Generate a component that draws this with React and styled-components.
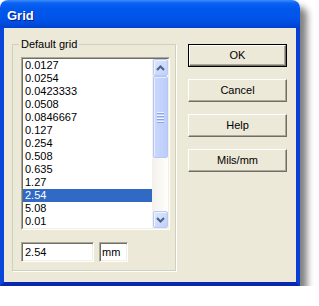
import React from 'react';
import styled, { createGlobalStyle } from 'styled-components';

const Global = createGlobalStyle`
  html, body { margin: 0; padding: 0; background: #fff; }
  body { font-family: "Liberation Sans", Arial, sans-serif; font-size: 11px; color: #000; }
  * { box-sizing: border-box; }
`;

const Window = styled.div`
  width: 300px;
  height: 286px;
  display: flex;
  flex-direction: column;
  border-radius: 8px 8px 0 0;
  box-shadow: 7px 7px 7px rgba(0, 0, 0, 0.5);
`;

const TitleBar = styled.div`
  height: 28px;
  flex: none;
  display: flex;
  align-items: center;
  padding: 2px 0 0 7px;
  border-radius: 8px 8px 0 0;
  background: linear-gradient(
    to bottom,
    #3d8dfb 0px,
    #0b63f2 3px,
    #0058ee 8px,
    #0054e9 18px,
    #004bdd 24px,
    #0041d0 28px
  );
  color: #fff;
  font-family: "Liberation Sans", Arial, sans-serif;
  font-weight: bold;
  font-size: 13px;
  text-shadow: 1px 1px 0 #0a1f8c;
`;

const Frame = styled.div`
  flex: 1;
  display: flex;
  border-left: 4px solid #0846dc;
  border-right: 4px solid #0a3ed2;
  border-bottom: 4px solid #0a28ad;
  background: #ece9d8;
`;

const Client = styled.div`
  flex: 1;
  display: flex;
  align-items: flex-start;
  gap: 12px;
  padding: 10px 9px 0 8px;
  background: #ece9d8;
`;

const GroupBox = styled.fieldset`
  margin: 0;
  width: 164px;
  min-width: 0;
  padding: 6px 8px 8px 8px;
  border: 1px solid #d0d0bf;
  box-shadow: 1px 1px 0 #fff;
  display: flex;
  flex-direction: column;
  gap: 12px;
`;

const Legend = styled.legend`
  margin-left: -2px;
  padding: 0 2px;
  line-height: 13px;
  font-size: 11px;
`;

const ListOuter = styled.div`
  width: 149px;
  height: 173px;
  border: 1px solid;
  border-color: #aca899 #fff #fff #aca899;
  display: flex;
`;

const ListInner = styled.div`
  flex: 1;
  display: flex;
  border: 1px solid;
  border-color: #716f64 #f1efe2 #f1efe2 #716f64;
  background: #fff;
`;

const Items = styled.div`
  flex: 1;
  display: flex;
  flex-direction: column;
  overflow: hidden;
`;

const Item = styled.div`
  height: 13px;
  line-height: 13px;
  padding-left: 2px;
  white-space: nowrap;
  background: ${(p) => (p.$selected ? '#316ac5' : 'transparent')};
  color: ${(p) => (p.$selected ? '#fff' : '#000')};
`;

const ScrollBar = styled.div`
  width: 16px;
  flex: none;
  display: flex;
  flex-direction: column;
  background: linear-gradient(to right, #f3f1ec, #fefefb);
`;

const ScrollButton = styled.div`
  height: 17px;
  margin: 0 0 0 1px;
  border: 1px solid #b9cbf5;
  border-radius: 2px;
  background: linear-gradient(to bottom right, #dce6fd, #bfd0fa);
  display: flex;
  align-items: center;
  justify-content: center;
  box-shadow: inset 1px 1px 0 #eef3ff;
`;

const Thumb = styled.div`
  height: 82px;
  margin: 0 0 0 1px;
  border: 1px solid #b4c8f6;
  border-radius: 2px;
  background: linear-gradient(to right, #c9d8fc, #bccdfa);
  box-shadow: inset 1px 1px 0 #e5ecff;
  display: flex;
  flex-direction: column;
  align-items: center;
  justify-content: center;
  gap: 1px;
`;

const Grip = styled.div`
  width: 7px;
  height: 1px;
  background: #eef3ff;
  box-shadow: 0 1px 0 #8ca4e0;
  margin-bottom: 1px;
`;

const Track = styled.div`
  flex: 1;
`;

const FieldRow = styled.div`
  display: flex;
  gap: 5px;
`;

const Field = styled.div`
  width: ${(p) => p.$w}px;
  height: 20px;
  border: 1px solid;
  border-color: #aca899 #fff #fff #aca899;
  background: #fff;
  box-shadow: inset 1px 1px 0 #716f64, inset -1px -1px 0 #f1efe2;
  padding-left: ${(p) => p.$pad}px;
  line-height: 18px;
`;

const ButtonColumn = styled.div`
  margin-top: 6px;
  display: flex;
  flex-direction: column;
  gap: 12px;
  width: 99px;
`;

const Button = styled.div`
  height: 23px;
  display: flex;
  border: ${(p) => (p.$default ? '1px solid #000' : 'none')};
`;

const ButtonFace = styled.div`
  flex: 1;
  display: flex;
  align-items: center;
  justify-content: center;
  border: 1px solid;
  border-color: #fff #716f64 #716f64 #fff;
  box-shadow: inset -1px -1px 0 #aca899;
  background: #ece9d8;
  font-size: 11px;
  padding-bottom: 1px;
`;

const Chevron = ({ up }) => (
  <svg width="9" height="6" viewBox="0 0 9 6">
    <path
      d={up ? 'M1 5 L4.5 1.5 L8 5' : 'M1 1 L4.5 4.5 L8 1'}
      fill="none"
      stroke="#4d6185"
      strokeWidth="2"
    />
  </svg>
);

const values = [
  '0.0127',
  '0.0254',
  '0.0423333',
  '0.0508',
  '0.0846667',
  '0.127',
  '0.254',
  '0.508',
  '0.635',
  '1.27',
  '2.54',
  '5.08',
  '0.01',
];

export default function App() {
  return (
    <>
      <Global />
      <Window>
        <TitleBar>Grid</TitleBar>
        <Frame>
          <Client>
            <GroupBox>
              <Legend>Default grid</Legend>
              <ListOuter>
                <ListInner>
                  <Items>
                    {values.map((v) => (
                      <Item key={v} $selected={v === '2.54'}>
                        {v}
                      </Item>
                    ))}
                  </Items>
                  <ScrollBar>
                    <ScrollButton>
                      <Chevron up />
                    </ScrollButton>
                    <Thumb>
                      <Grip />
                      <Grip />
                      <Grip />
                      <Grip />
                    </Thumb>
                    <Track />
                    <ScrollButton>
                      <Chevron />
                    </ScrollButton>
                  </ScrollBar>
                </ListInner>
              </ListOuter>
              <FieldRow>
                <Field $w={73} $pad={3}>2.54</Field>
                <Field $w={29} $pad={2}>mm</Field>
              </FieldRow>
            </GroupBox>
            <ButtonColumn>
              <Button $default>
                <ButtonFace>OK</ButtonFace>
              </Button>
              <Button>
                <ButtonFace>Cancel</ButtonFace>
              </Button>
              <Button>
                <ButtonFace>Help</ButtonFace>
              </Button>
              <Button>
                <ButtonFace>Mils/mm</ButtonFace>
              </Button>
            </ButtonColumn>
          </Client>
        </Frame>
      </Window>
    </>
  );
}
